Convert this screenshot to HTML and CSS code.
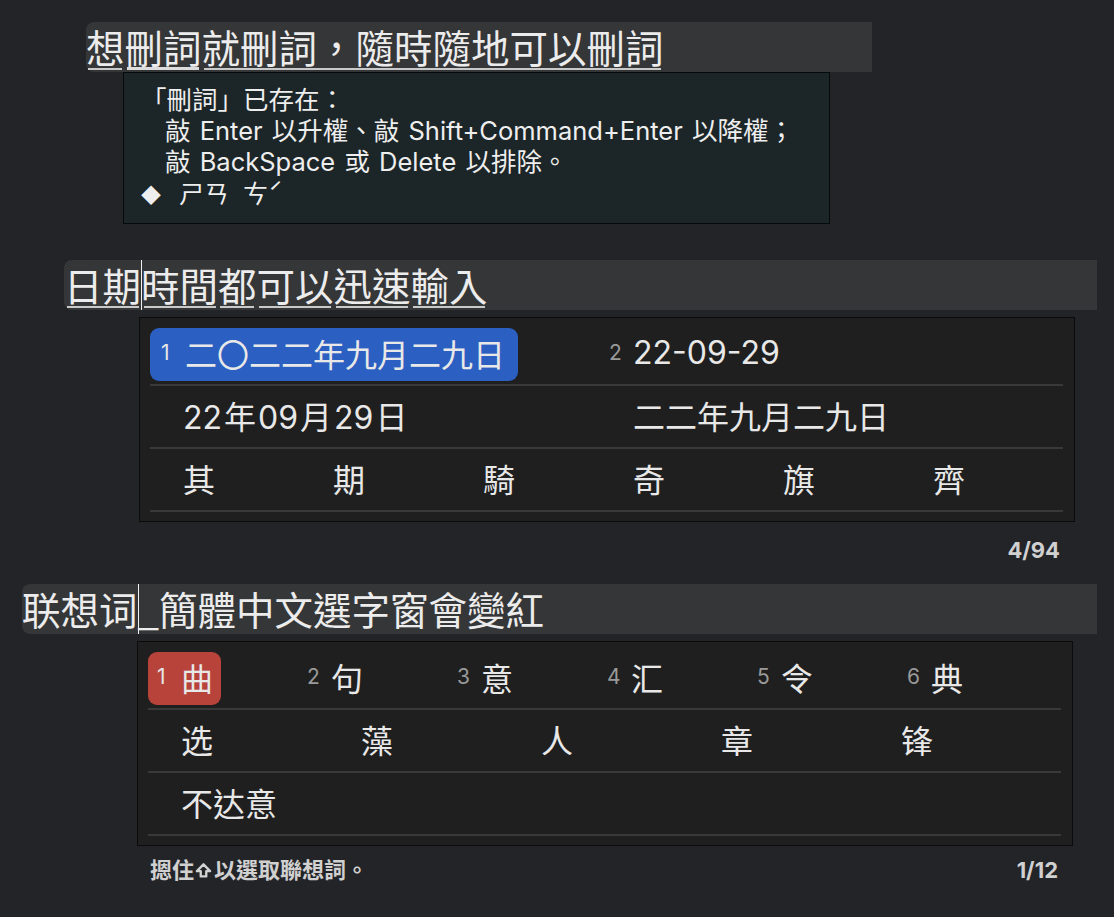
FILE: index.html
```html
<!DOCTYPE html>
<html lang="zh-Hant">
<head>
<meta charset="utf-8">
<title>輸入法</title>
<link rel="stylesheet" href="styles.css">
</head>
<body>
<div class="page">
  <div class="bar bar1">
    <span class="seg">想</span><span class="seg seg-active">刪詞</span><span class="seg">就刪詞，隨時隨地可以刪詞</span>
  </div>
  <div class="tip">
    <div class="tip-line">「刪詞」已存在：</div>
    <div class="tip-line indent">敲 Enter 以升權、敲 Shift+Command+Enter 以降權；</div>
    <div class="tip-line indent">敲 BackSpace 或 Delete 以排除。</div>
    <div class="tip-line"><span class="diamond">◆</span><span class="zhuyin">ㄕㄢ</span><span class="zhuyin zhuyin2">ㄘˊ</span></div>
  </div>

  <div class="bar bar2">
    <span class="seg">日期</span><span class="caret"></span><span class="seg">時間</span><span class="seg">都</span><span class="seg">可以</span><span class="seg">迅速</span><span class="seg">輸入</span>
  </div>
  <div class="panel panel1">
    <div class="row row-first">
      <div class="cand sel sel-blue span3"><span class="num">1</span><span class="txt">二〇二二年九月二九日</span></div>
      <div class="cand span3"><span class="num">2</span><span class="txt">22-09-29</span></div>
    </div>
    <div class="row">
      <div class="cand span3"><span class="num"></span><span class="txt">22<span class="gap">年</span>09<span class="gap">月</span>29<span class="gap">日</span></span></div>
      <div class="cand span3"><span class="num"></span><span class="txt">二二年九月二九日</span></div>
    </div>
    <div class="row">
      <div class="cand"><span class="num"></span><span class="txt">其</span></div>
      <div class="cand"><span class="num"></span><span class="txt">期</span></div>
      <div class="cand"><span class="num"></span><span class="txt">騎</span></div>
      <div class="cand"><span class="num"></span><span class="txt">奇</span></div>
      <div class="cand"><span class="num"></span><span class="txt">旗</span></div>
      <div class="cand"><span class="num"></span><span class="txt">齊</span></div>
    </div>
  </div>
  <div class="meta meta1"><span>4/94</span></div>

  <div class="bar bar3">
    <span class="seg seg-plain">联想词</span><span class="caret"></span><span class="seg seg-plain">_簡體中文選字窗會變紅</span>
  </div>
  <div class="panel panel2">
    <div class="row row-first">
      <div class="cand sel sel-red"><span class="num">1</span><span class="txt">曲</span></div>
      <div class="cand"><span class="num">2</span><span class="txt">句</span></div>
      <div class="cand"><span class="num">3</span><span class="txt">意</span></div>
      <div class="cand"><span class="num">4</span><span class="txt">汇</span></div>
      <div class="cand"><span class="num">5</span><span class="txt">令</span></div>
      <div class="cand"><span class="num">6</span><span class="txt">典</span></div>
    </div>
    <div class="row row-5">
      <div class="cand"><span class="num"></span><span class="txt">选</span></div>
      <div class="cand"><span class="num"></span><span class="txt">藻</span></div>
      <div class="cand"><span class="num"></span><span class="txt">人</span></div>
      <div class="cand"><span class="num"></span><span class="txt">章</span></div>
      <div class="cand"><span class="num"></span><span class="txt">锋</span></div>
    </div>
    <div class="row">
      <div class="cand span3"><span class="num"></span><span class="txt">不达意</span></div>
    </div>
  </div>
  <div class="meta meta2">
    <span class="hint">摁住<svg class="shift" viewBox="0 0 16 16" width="16" height="16" aria-hidden="true"><path d="M8 2.2 L14.2 8.6 H10.6 V13.6 H5.4 V8.6 H1.8 Z" fill="none" stroke="#d2d2d2" stroke-width="2.2" stroke-linejoin="round"/></svg>以選取聯想詞。</span>
    <span>1/12</span>
  </div>
</div>
</body>
</html>
```

FILE: styles.css
```css
html, body {
  margin: 0;
  padding: 0;
}

body {
  background: #232428;
  font-family: "Noto Sans CJK TC", sans-serif;
  color: #e8e8e8;
}

.page {
  width: 1114px;
  height: 917px;
  box-sizing: border-box;
  padding-top: 22px;
  overflow: hidden;
}

/* composition bars */
.bar {
  display: flex;
  align-items: flex-start;
  height: 50px;
  box-sizing: border-box;
  padding-top: 4px;
  background: #353637;
  border-radius: 8px 0 0 8px;
  font-size: 38.5px;
  color: #ececec;
  white-space: nowrap;
}

.bar1 {
  margin-left: 86px;
  width: 786px;
}

.bar2 {
  margin-top: 36px;
  margin-left: 64px;
  width: 1033px;
}

.bar3 {
  margin-top: 23px;
  margin-left: 22px;
  width: 1075px;
}

.seg {
  line-height: 40px;
  padding-bottom: 4px;
  background-image: linear-gradient(#c9c9c9, #c9c9c9);
  background-repeat: no-repeat;
  background-position: center bottom;
  background-size: calc(100% - 5px) 2px;
}

.seg-active {
  background-image: linear-gradient(#dcdcdc, #dcdcdc);
  background-size: calc(100% - 5px) 3px;
}

.seg-plain {
  background: none;
}

.caret {
  align-self: stretch;
  width: 1px;
  margin: -4px -1px 0 0;
  background: #f0f0f0;
}

/* tooltip */
.tip {
  margin-left: 123px;
  width: 707px;
  height: 152px;
  box-sizing: border-box;
  border: 1px solid #060909;
  background: #1c2527;
  padding: 11px 16px 0 17px;
  font-family: "Inter", "Noto Sans CJK TC", sans-serif;
  font-size: 25.5px;
  line-height: 31px;
  word-spacing: 2px;
  color: #eeeeee;
  white-space: nowrap;
}

.indent {
  padding-left: 24px;
}

.diamond {
  font-family: "Noto Sans CJK TC", sans-serif;
  font-size: 20px;
  margin-right: 18px;
}

.zhuyin {
  font-family: "Noto Sans CJK TC", sans-serif;
  font-size: 25px;
}

.zhuyin2 {
  margin-left: 14px;
}

/* candidate panels */
.panel {
  box-sizing: border-box;
  width: 936px;
  height: 205px;
  margin-top: 7px;
  background: #1f1f1f;
  border: 1px solid #0b0b0b;
  padding: 10px 11px 0 10px;
}

.panel1 {
  margin-left: 139px;
}

.panel2 {
  margin-left: 137px;
}

.row {
  display: grid;
  grid-template-columns: repeat(6, 150px);
  align-items: center;
  height: 63px;
  box-sizing: border-box;
  border-bottom: 2px solid #393939;
}

.row-first {
  height: 58px;
  align-items: start;
}

.row-5 {
  grid-template-columns: repeat(5, 180px);
}

.span3 {
  grid-column: span 3;
}

.cand {
  justify-self: start;
  display: inline-flex;
  align-items: center;
  height: 53px;
  box-sizing: border-box;
  padding: 0 8px 4px 9px;
  border-radius: 9px;
  font-family: "Inter", "Noto Sans CJK TC", sans-serif;
  font-size: 32px;
  color: #e8e8e8;
  white-space: nowrap;
}

.num {
  width: 15px;
  margin-right: 9px;
  font-size: 21px;
  color: #9a9a9a;
}

.gap {
  margin: 0 2px;
}

.sel .num {
  color: #e6e6e6;
}

.sel-blue {
  background: #2b5fc1;
  padding-left: 11px;
  padding-right: 13px;
}

.sel-red {
  background: #b7433b;
}

/* footers */
.meta {
  display: flex;
  justify-content: flex-end;
  align-items: center;
  box-sizing: border-box;
  width: 936px;
  font-family: "Inter", "Noto Sans CJK TC", sans-serif;
  font-weight: 700;
  font-size: 22px;
  line-height: 22px;
  color: #d0d0d0;
}

.meta1 {
  margin-left: 139px;
  margin-top: 17px;
  padding-right: 15px;
}

.meta2 {
  margin-left: 137px;
  margin-top: 13px;
  justify-content: space-between;
  padding: 0 15px 0 13px;
}

.hint {
  display: inline-flex;
  align-items: center;
}

.shift {
  width: 17px;
  height: 17px;
  margin: 0 2px 0 1px;
}
```
